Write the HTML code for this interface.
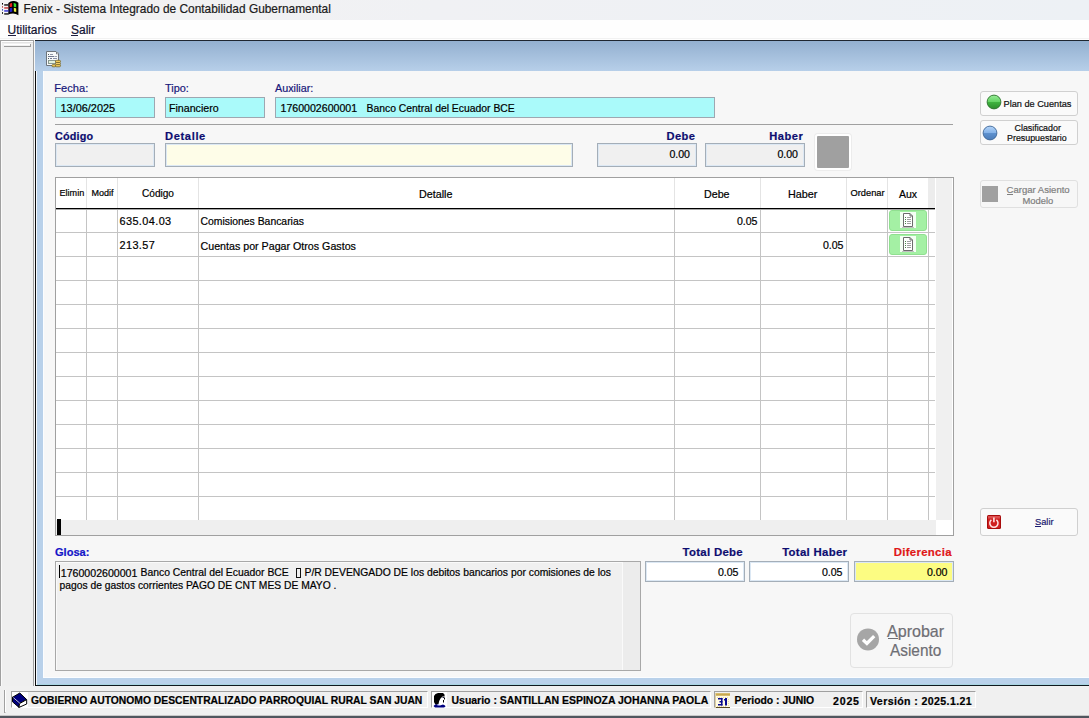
<!DOCTYPE html>
<html><head><meta charset="utf-8">
<style>
*{box-sizing:border-box;margin:0;padding:0}
html,body{width:1089px;height:718px;overflow:hidden;background:#f0f0f0;font-family:"Liberation Sans",sans-serif;font-size:11px;color:#000}
.a{position:absolute}
.t{position:absolute;white-space:pre;line-height:1;-webkit-text-stroke:.2px currentColor}
</style></head><body>
<div class="a" style="left:0px;top:0px;width:1089px;height:20px;background:linear-gradient(to right,#f3f2f2,#f0f1f4 40%,#edf1f5)"></div>
<div class="a" style="left:0px;top:20px;width:1089px;height:20px;background:#fefefe"></div>
<div class="a" style="left:0px;top:38px;width:1089px;height:1px;background:#f2f2f2"></div>
<div class="a" style="left:0px;top:40px;width:34px;height:647px;background:#efefef;border-left:1px solid #a0a0a0;border-right:1px solid #a0a0a0;border-top:1px solid #a0a0a0"></div>
<div class="a" style="left:1px;top:41px;width:32px;height:1px;background:#fff"></div>
<div class="a" style="left:1px;top:41px;width:1px;height:646px;background:#fafafa"></div>
<div class="a" style="left:2px;top:42px;width:31px;height:1px;background:#e2e2e2"></div>
<div class="a" style="left:4px;top:44px;width:27px;height:1px;background:#fff"></div>
<div class="a" style="left:4px;top:46px;width:27px;height:1px;background:#9c9c9c"></div>
<div class="a" style="left:30px;top:44px;width:1px;height:3px;background:#9c9c9c"></div>
<div class="a" style="left:34px;top:40px;width:1px;height:647px;background:#f8f8f8"></div>
<div class="a" style="left:35px;top:40px;width:1054px;height:1px;background:#1e2630"></div>
<div class="a" style="left:35px;top:41px;width:1054px;height:30px;background:linear-gradient(#93b0d0,#b7cfe9)"></div>
<div class="a" style="left:35px;top:71px;width:1px;height:615px;background:#0c0c0c"></div>
<div class="a" style="left:36px;top:71px;width:1px;height:614px;background:#f4f8fc"></div>
<div class="a" style="left:37px;top:71px;width:1052px;height:614px;background:#b9d1ea"></div>
<div class="a" style="left:36px;top:685px;width:1053px;height:1px;background:#10181e"></div>
<div class="a" style="left:37px;top:684px;width:1052px;height:1px;background:#a8d4e0"></div>
<div class="a" style="left:43px;top:71px;width:1046px;height:607px;background:#f7f7f7"></div>
<div class="a" style="left:43px;top:71px;width:1px;height:607px;background:#fbfdff"></div>
<div class="a" style="left:43px;top:677px;width:1046px;height:1px;background:#fbfdff"></div>
<svg class="a" style="left:46px;top:51px" width="16" height="17" viewBox="0 0 16 17">
<path d="M0.5 0.5H10L12.5 3V14.5H0.5Z" fill="#f6f9fa" stroke="#6c747c" stroke-width="1"/>
<rect x="10" y="1" width="2.2" height="2.2" fill="#687078"/><rect x="10.8" y="1.6" width="1" height="1" fill="#fff"/>
<rect x="2" y="3" width="1" height="1" fill="#505860"/><rect x="4" y="3" width="3" height="1" fill="#9098a8"/>
<rect x="2" y="5" width="6" height="1" fill="#707890"/><rect x="8.5" y="5" width="2.5" height="1" fill="#98a0b0"/>
<rect x="2" y="7" width="1" height="1" fill="#505860"/><rect x="4" y="7" width="2" height="1" fill="#707890"/><rect x="7" y="7" width="4" height="1" fill="#8890a8"/>
<rect x="2.5" y="9.5" width="7" height="3" fill="#e4f2dc" stroke="#8a9890" stroke-width="1"/>
<rect x="9.5" y="9.3" width="5" height="2.2" rx="1.1" fill="#f2cc58" stroke="#6a5a20" stroke-width=".7"/>
<rect x="9.5" y="11.5" width="5" height="2.2" rx="1.1" fill="#f4d068" stroke="#6a5a20" stroke-width=".7"/>
<rect x="5.8" y="13.6" width="4.2" height="2.2" rx="1.1" fill="#f2cc58" stroke="#6a5a20" stroke-width=".7"/>
<rect x="9.5" y="13.6" width="5" height="2.2" rx="1.1" fill="#f2cc58" stroke="#6a5a20" stroke-width=".7"/>
</svg>
<svg class="a" style="left:0px;top:0px" width="20" height="17" viewBox="0 0 20 17">
<path d="M8.3 3 Q11 0.6 14 1.1 Q16.6 1.4 18.4 2.8 L18.4 15.2 Q16 13.4 13 13.4 Q10.5 13.4 8.3 14.6 Z" fill="#000"/>
<path d="M9.6 3.8 Q10.8 2.9 12.1 2.9 L12.2 6.7 Q10.9 6.6 9.7 7.2Z" fill="#e82020"/>
<path d="M13.6 3.1 Q15 3.2 16.2 3.9 L16.2 7.2 Q15 6.8 13.8 6.7Z" fill="#30e030"/>
<path d="M9.7 8.2 Q10.9 7.6 12.2 7.7 L12.3 11.8 Q11 11.7 9.8 12.3Z" fill="#2020c8"/>
<path d="M13.8 7.8 Q15 7.9 16.2 8.4 L16.2 12 Q15 11.6 13.9 11.6Z" fill="#f0f040"/>
<rect x="2" y="3" width="1" height="1.6" fill="#000"/><rect x="2" y="6.2" width="1" height="1.4" fill="#b03030"/>
<rect x="2" y="9.2" width="1" height="1.4" fill="#2030b0"/><rect x="2" y="12.2" width="1" height="1.6" fill="#000"/>
<rect x="4.2" y="4.3" width="4.3" height="1.3" fill="#000"/><rect x="4.2" y="7.3" width="4.3" height="1.3" fill="#c02020"/>
<rect x="4.2" y="10.3" width="4.3" height="1.3" fill="#1818d0"/><rect x="4.2" y="13.3" width="4.3" height="1.3" fill="#000"/>
</svg>
<div class="t " style="left:23.50px;top:3.93px;font-size:11.9px;color:#1a1a1a;font-weight:normal;">Fenix - Sistema Integrado de Contabilidad Gubernamental</div>
<div class="t " style="left:7.50px;top:23.84px;font-size:12px;color:#101030;font-weight:normal;">Utilitarios</div>
<div class="a" style="left:8px;top:35px;width:8px;height:1px;background:#202040"></div>
<div class="t " style="left:71.00px;top:23.84px;font-size:12px;color:#101030;font-weight:normal;">Salir</div>
<div class="a" style="left:71px;top:35px;width:7px;height:1px;background:#202040"></div>
<div class="t " style="left:54.30px;top:82.60px;font-size:11.1px;color:#17177a;font-weight:normal;">Fecha:</div>
<div class="t " style="left:165.00px;top:82.77px;font-size:10.9px;color:#17177a;font-weight:normal;">Tipo:</div>
<div class="t " style="left:275.00px;top:82.90px;font-size:10.75px;color:#17177a;font-weight:normal;">Auxiliar:</div>
<div class="a" style="left:55px;top:97px;width:100px;height:21px;background:#aafafa;border:1px solid #9ea7b1"></div>
<div class="a" style="left:165px;top:97px;width:100px;height:21px;background:#aafafa;border:1px solid #9ea7b1"></div>
<div class="a" style="left:275px;top:97px;width:440px;height:21px;background:#aafafa;border:1px solid #9ea7b1"></div>
<div class="t " style="left:60.50px;top:102.76px;font-size:10.92px;color:#000;font-weight:normal;">13/06/2025</div>
<div class="t " style="left:169.00px;top:103.48px;font-size:10.65px;color:#000;font-weight:normal;">Financiero</div>
<div class="t " style="left:280.50px;top:103.03px;font-size:10.6px;color:#000;font-weight:normal;">1760002600001</div>
<div class="t " style="left:366.50px;top:103.71px;font-size:10.38px;color:#000;font-weight:normal;">Banco Central del Ecuador BCE</div>
<div class="a" style="left:55px;top:124px;width:898px;height:1px;background:#a0a0a0"></div>
<div class="t " style="left:55.00px;top:130.86px;font-size:10.8px;color:#0d0d70;font-weight:bold;letter-spacing:.2px">Código</div>
<div class="t " style="left:165.00px;top:130.60px;font-size:11.1px;color:#0d0d70;font-weight:bold;letter-spacing:.65px">Detalle</div>
<div class="t " style="right:393.70px;top:130.60px;font-size:11.1px;color:#0d0d70;font-weight:bold;letter-spacing:.4px">Debe</div>
<div class="t " style="right:285.70px;top:130.60px;font-size:11.1px;color:#0d0d70;font-weight:bold;letter-spacing:.5px">Haber</div>
<div class="a" style="left:55px;top:143px;width:100px;height:24px;background:#f0f0f0;border:1px solid #a4aeb8;box-shadow:inset 0 0 0 1px #dce8f4"></div>
<div class="a" style="left:165px;top:143px;width:408px;height:24px;background:#fefde8;border:1px solid #a4aeb8;box-shadow:inset 0 0 0 1px #dce8f4"></div>
<div class="a" style="left:597px;top:143px;width:100px;height:24px;background:#f0f0f0;border:1px solid #a4aeb8;box-shadow:inset 0 0 0 1px #dce8f4"></div>
<div class="a" style="left:705px;top:143px;width:100px;height:24px;background:#f0f0f0;border:1px solid #a4aeb8;box-shadow:inset 0 0 0 1px #dce8f4"></div>
<div class="t " style="right:399.00px;top:149.03px;font-size:10.6px;color:#000;font-weight:normal;">0.00</div>
<div class="t " style="right:291.00px;top:149.03px;font-size:10.6px;color:#000;font-weight:normal;">0.00</div>
<div class="a" style="left:815px;top:134px;width:36px;height:36px;background:#a0a0a0;border:2px solid #fff;border-radius:3px;box-shadow:0 0 0 1px #ececec"></div>
<div class="a" style="left:55px;top:177px;width:899px;height:359px;background:#fff;border:1px solid #a0a0a0"></div>
<div class="a" style="left:86px;top:178px;width:1px;height:30px;background:#e4e4e4"></div>
<div class="a" style="left:117px;top:178px;width:1px;height:30px;background:#e4e4e4"></div>
<div class="a" style="left:198px;top:178px;width:1px;height:30px;background:#e4e4e4"></div>
<div class="a" style="left:674px;top:178px;width:1px;height:30px;background:#e4e4e4"></div>
<div class="a" style="left:760px;top:178px;width:1px;height:30px;background:#e4e4e4"></div>
<div class="a" style="left:846px;top:178px;width:1px;height:30px;background:#e4e4e4"></div>
<div class="a" style="left:887px;top:178px;width:1px;height:30px;background:#e4e4e4"></div>
<div class="a" style="left:928px;top:178px;width:1px;height:30px;background:#e4e4e4"></div>
<div class="a" style="left:928px;top:178px;width:7px;height:30px;background:#ececec"></div>
<div class="a" style="left:56px;top:208px;width:879px;height:1px;background:#000"></div>
<div class="a" style="left:56px;top:209px;width:879px;height:1px;background:#a8a8a8"></div>
<div class="a" style="left:56px;top:232px;width:879px;height:1px;background:#c4c4c4"></div>
<div class="a" style="left:56px;top:256px;width:879px;height:1px;background:#c4c4c4"></div>
<div class="a" style="left:56px;top:280px;width:879px;height:1px;background:#c4c4c4"></div>
<div class="a" style="left:56px;top:304px;width:879px;height:1px;background:#c4c4c4"></div>
<div class="a" style="left:56px;top:328px;width:879px;height:1px;background:#c4c4c4"></div>
<div class="a" style="left:56px;top:352px;width:879px;height:1px;background:#c4c4c4"></div>
<div class="a" style="left:56px;top:376px;width:879px;height:1px;background:#c4c4c4"></div>
<div class="a" style="left:56px;top:400px;width:879px;height:1px;background:#c4c4c4"></div>
<div class="a" style="left:56px;top:424px;width:879px;height:1px;background:#c4c4c4"></div>
<div class="a" style="left:56px;top:448px;width:879px;height:1px;background:#c4c4c4"></div>
<div class="a" style="left:56px;top:472px;width:879px;height:1px;background:#c4c4c4"></div>
<div class="a" style="left:56px;top:496px;width:879px;height:1px;background:#c4c4c4"></div>
<div class="a" style="left:86px;top:210px;width:1px;height:310px;background:#c4c4c4"></div>
<div class="a" style="left:117px;top:210px;width:1px;height:310px;background:#c4c4c4"></div>
<div class="a" style="left:198px;top:210px;width:1px;height:310px;background:#c4c4c4"></div>
<div class="a" style="left:674px;top:210px;width:1px;height:310px;background:#c4c4c4"></div>
<div class="a" style="left:760px;top:210px;width:1px;height:310px;background:#c4c4c4"></div>
<div class="a" style="left:846px;top:210px;width:1px;height:310px;background:#c4c4c4"></div>
<div class="a" style="left:887px;top:210px;width:1px;height:310px;background:#c4c4c4"></div>
<div class="a" style="left:928px;top:210px;width:1px;height:310px;background:#c4c4c4"></div>
<div class="a" style="left:936px;top:178px;width:16px;height:342px;background:#f0f0f0"></div>
<div class="a" style="left:56px;top:520px;width:880px;height:15px;background:#efefef"></div>
<div class="a" style="left:57px;top:519px;width:4px;height:16px;background:#000"></div>
<div class="t " style="left:59.50px;top:189.30px;font-size:9.1px;color:#000;font-weight:normal;">Elimin</div>
<div class="t " style="left:91.50px;top:189.38px;font-size:9px;color:#000;font-weight:normal;">Modif</div>
<div class="t " style="left:142.00px;top:189.45px;font-size:10.1px;color:#000;font-weight:normal;">Código</div>
<div class="t " style="left:419.00px;top:188.90px;font-size:10.75px;color:#000;font-weight:normal;">Detalle</div>
<div class="t " style="left:704.00px;top:188.94px;font-size:10.7px;color:#000;font-weight:normal;">Debe</div>
<div class="t " style="left:788.00px;top:188.86px;font-size:10.8px;color:#000;font-weight:normal;">Haber</div>
<div class="t " style="left:850.50px;top:189.13px;font-size:9.3px;color:#000;font-weight:normal;">Ordenar</div>
<div class="t " style="left:899.00px;top:189.11px;font-size:10.5px;color:#000;font-weight:normal;">Aux</div>
<div class="t " style="left:119.50px;top:215.77px;font-size:10.9px;color:#000;font-weight:normal;letter-spacing:.4px">635.04.03</div>
<div class="t " style="left:200.50px;top:217.20px;font-size:10.4px;color:#000;font-weight:normal;">Comisiones Bancarias</div>
<div class="t " style="right:331.50px;top:216.03px;font-size:10.6px;color:#000;font-weight:normal;">0.05</div>
<div class="t " style="left:119.50px;top:239.77px;font-size:10.9px;color:#000;font-weight:normal;letter-spacing:.4px">213.57</div>
<div class="t " style="left:200.50px;top:240.96px;font-size:10.68px;color:#000;font-weight:normal;">Cuentas por Pagar Otros Gastos</div>
<div class="t " style="right:245.50px;top:240.03px;font-size:10.6px;color:#000;font-weight:normal;">0.05</div>
<div class="a" style="left:889px;top:210px;width:38px;height:21px;background:#a4f0a4;border:1px solid #90e090;border-radius:3px"></div>
<svg class="a" style="left:900px;top:212px" width="16" height="16" viewBox="0 0 16 16">
<rect x="0" y="0" width="16" height="16" fill="#f4fff4"/>
<path d="M3.5 1.5h6.5l2.5 2.5v10.5h-9z" fill="#fff" stroke="#6c6c6c" stroke-width="1"/>
<path d="M10 1.5v2.5h2.5" fill="none" stroke="#6c6c6c" stroke-width="1"/>
<rect x="5" y="5" width="1" height="1" fill="#4a8a4a"/><rect x="7" y="5" width="4" height="1" fill="#a0a0a0"/>
<rect x="5" y="7" width="1" height="1" fill="#4a8a4a"/><rect x="7" y="7" width="4" height="1" fill="#a0a0a0"/>
<rect x="5" y="9" width="1" height="1" fill="#4a8a4a"/><rect x="7" y="9" width="4" height="1" fill="#a0a0a0"/>
<rect x="5" y="11" width="1" height="1" fill="#4a8a4a"/><rect x="7" y="11" width="4" height="1" fill="#a0a0a0"/>
<rect x="2" y="15" width="12" height="1" fill="#c0c0c0"/>
</svg>
<div class="a" style="left:889px;top:234px;width:38px;height:21px;background:#a4f0a4;border:1px solid #90e090;border-radius:3px"></div>
<svg class="a" style="left:900px;top:236px" width="16" height="16" viewBox="0 0 16 16">
<rect x="0" y="0" width="16" height="16" fill="#f4fff4"/>
<path d="M3.5 1.5h6.5l2.5 2.5v10.5h-9z" fill="#fff" stroke="#6c6c6c" stroke-width="1"/>
<path d="M10 1.5v2.5h2.5" fill="none" stroke="#6c6c6c" stroke-width="1"/>
<rect x="5" y="5" width="1" height="1" fill="#4a8a4a"/><rect x="7" y="5" width="4" height="1" fill="#a0a0a0"/>
<rect x="5" y="7" width="1" height="1" fill="#4a8a4a"/><rect x="7" y="7" width="4" height="1" fill="#a0a0a0"/>
<rect x="5" y="9" width="1" height="1" fill="#4a8a4a"/><rect x="7" y="9" width="4" height="1" fill="#a0a0a0"/>
<rect x="5" y="11" width="1" height="1" fill="#4a8a4a"/><rect x="7" y="11" width="4" height="1" fill="#a0a0a0"/>
<rect x="2" y="15" width="12" height="1" fill="#c0c0c0"/>
</svg>
<div class="t " style="left:55.00px;top:546.65px;font-size:11.05px;color:#1414c8;font-weight:bold;">Glosa:</div>
<div class="a" style="left:55px;top:561px;width:586px;height:110px;background:#f0f0f0;border:1px solid #a8a8a8;box-shadow:inset 1px 1px 0 #fafafa"></div>
<div class="a" style="left:622px;top:562px;width:1px;height:108px;background:#fafafa"></div>
<div class="a" style="left:623px;top:562px;width:17px;height:108px;background:#ececec"></div>
<div class="a" style="left:59px;top:565px;width:1px;height:13px;background:#000"></div>
<div class="t " style="left:60.80px;top:568.03px;font-size:10.6px;color:#000;font-weight:normal;">1760002600001</div>
<div class="t " style="left:140.50px;top:568.21px;font-size:10.38px;color:#000;font-weight:normal;">Banco Central del Ecuador BCE</div>
<div class="a" style="left:296px;top:568px;width:5px;height:10px;border:1px solid #111"></div>
<div class="t " style="left:304.50px;top:568.24px;font-size:10.35px;color:#000;font-weight:normal;">P/R DEVENGADO DE los debitos bancarios por comisiones de los</div>
<div class="t " style="left:59.50px;top:581.08px;font-size:10.3px;color:#000;font-weight:normal;">pagos de gastos corrientes PAGO DE CNT MES DE MAYO .</div>
<div class="t " style="right:346.00px;top:546.85px;font-size:11.4px;color:#0d0d70;font-weight:bold;letter-spacing:.3px">Total Debe</div>
<div class="t " style="right:241.70px;top:546.85px;font-size:11.4px;color:#0d0d70;font-weight:bold;letter-spacing:.3px">Total Haber</div>
<div class="t " style="right:137.20px;top:546.85px;font-size:11.4px;color:#e01818;font-weight:bold;letter-spacing:.3px">Diferencia</div>
<div class="a" style="left:645px;top:561px;width:100px;height:21px;background:#fff;border:1px solid #a4aeb8;box-shadow:inset 0 0 0 1px #dce8f4"></div>
<div class="a" style="left:749px;top:561px;width:100px;height:21px;background:#fff;border:1px solid #a4aeb8;box-shadow:inset 0 0 0 1px #dce8f4"></div>
<div class="a" style="left:854px;top:561px;width:100px;height:21px;background:#fcfc82;border:1px solid #a4aeb8;box-shadow:inset 0 0 0 1px #dce8f4"></div>
<div class="t " style="right:350.50px;top:567.03px;font-size:10.6px;color:#000;font-weight:normal;">0.05</div>
<div class="t " style="right:246.50px;top:567.03px;font-size:10.6px;color:#000;font-weight:normal;">0.05</div>
<div class="t " style="right:141.50px;top:567.03px;font-size:10.6px;color:#000;font-weight:normal;">0.00</div>
<div class="a" style="left:850px;top:613px;width:103px;height:55px;background:#f7f7f7;border:1px solid #e2e2e2;border-radius:4px"></div>
<svg class="a" style="left:857px;top:628px" width="22" height="23" viewBox="0 0 22 23">
<circle cx="11" cy="11.4" r="11" fill="#a6a6a6"/>
<path d="M6 11.8 L9.9 15.4 L17.2 8.2" fill="none" stroke="#fff" stroke-width="3.3"/>
</svg>
<div class="t " style="left:887.30px;top:622.81px;font-size:17px;color:#6e6e74;font-weight:normal;transform:scaleX(.945);transform-origin:0 0">Aprobar</div>
<div class="a" style="left:888px;top:638px;width:10px;height:1px;background:#6e6e74"></div>
<div class="t " style="left:889.80px;top:641.61px;font-size:17px;color:#6e6e74;font-weight:normal;transform:scaleX(.905);transform-origin:0 0">Asiento</div>
<div class="a" style="left:980px;top:91px;width:98px;height:25px;background:#fafafa;border:1px solid #d0d0d0;border-radius:3px"></div>
<svg class="a" style="left:986px;top:94px" width="16" height="16" viewBox="0 0 16 16">
<defs><linearGradient id="gg" x1="0" y1="0" x2="0" y2="1"><stop offset="0" stop-color="#98ec98"/><stop offset=".5" stop-color="#62d262"/><stop offset=".5" stop-color="#3fb43f"/><stop offset="1" stop-color="#2c8c2c"/></linearGradient></defs>
<circle cx="8" cy="8" r="6.9" fill="url(#gg)" stroke="#2c702c" stroke-width=".9"/>
</svg>
<div class="t " style="left:1003.50px;top:99.71px;font-size:9.2px;color:#101010;font-weight:normal;">Plan de Cuentas</div>
<div class="a" style="left:980px;top:120px;width:98px;height:25px;background:#fafafa;border:1px solid #d0d0d0;border-radius:3px"></div>
<svg class="a" style="left:982px;top:125px" width="16" height="16" viewBox="0 0 16 16">
<defs><linearGradient id="bg" x1="0" y1="0" x2="0" y2="1"><stop offset="0" stop-color="#b4d4f8"/><stop offset=".5" stop-color="#84b2e8"/><stop offset=".5" stop-color="#5f92cf"/><stop offset="1" stop-color="#4c7cb8"/></linearGradient></defs>
<circle cx="8" cy="8" r="6.9" fill="url(#bg)" stroke="#3e6696" stroke-width=".9"/>
</svg>
<div class="t " style="left:1014.50px;top:123.97px;font-size:8.9px;color:#101010;font-weight:normal;">Clasificador</div>
<div class="t " style="left:1007.00px;top:134.47px;font-size:8.9px;color:#101010;font-weight:normal;">Presupuestario</div>
<div class="a" style="left:980px;top:180px;width:98px;height:28px;background:#f7f7f7;border:1px solid #e0e0e0;border-radius:3px"></div>
<div class="a" style="left:982px;top:186px;width:16px;height:16px;background:#a0a0a0"></div>
<div class="t " style="left:1006.50px;top:184.92px;font-size:9.55px;color:#808080;font-weight:normal;">Cargar Asiento</div>
<div class="a" style="left:1007px;top:194px;width:6px;height:1px;background:#808080"></div>
<div class="t " style="left:1022.50px;top:196.04px;font-size:9.4px;color:#808080;font-weight:normal;">Modelo</div>
<div class="a" style="left:980px;top:508px;width:98px;height:28px;background:#fafafa;border:1px solid #d0d0d0;border-radius:3px"></div>
<svg class="a" style="left:987px;top:515px" width="14" height="14" viewBox="0 0 14 14">
<rect width="14" height="14" rx="1.5" fill="#a80c0c"/>
<rect x="1" y="1" width="12" height="12" rx="1" fill="#d02020"/>
<rect x="1" y="1" width="12" height="2.5" fill="#e87070" opacity=".6"/>
<path d="M4.4 4.9 A4.1 4.1 0 1 0 9.4 4.9" stroke="#ffe4e4" stroke-width="1.5" fill="none"/>
<path d="M6.9 2.6 V7.3" stroke="#ffe4e4" stroke-width="1.6"/>
</svg>
<div class="t " style="left:1035.00px;top:518.13px;font-size:9.3px;color:#1a1a70;font-weight:normal;">Salir</div>
<div class="a" style="left:1035px;top:526px;width:6px;height:1px;background:#1a1a70"></div>
<div class="a" style="left:0px;top:686px;width:1089px;height:32px;background:#f0f0f0"></div>
<div class="a" style="left:0px;top:715px;width:1089px;height:1px;background:#c8c8c8"></div>
<div class="a" style="left:0px;top:716px;width:1089px;height:2px;background:#50565e"></div>
<div class="a" style="left:4px;top:690px;width:2px;height:23px;border-left:1px solid #a0a0a0;border-right:1px solid #fff;border-bottom:1px solid #a0a0a0"></div>
<div class="a" style="left:11px;top:691px;width:417px;height:17px;border-top:1px solid #a0a0a0;border-left:1px solid #a0a0a0;border-bottom:1px solid #fff;border-right:1px solid #fff"></div>
<div class="a" style="left:431px;top:691px;width:280px;height:17px;border-top:1px solid #a0a0a0;border-left:1px solid #a0a0a0;border-bottom:1px solid #fff;border-right:1px solid #fff"></div>
<div class="a" style="left:714px;top:691px;width:149px;height:17px;border-top:1px solid #a0a0a0;border-left:1px solid #a0a0a0;border-bottom:1px solid #fff;border-right:1px solid #fff"></div>
<div class="a" style="left:866px;top:691px;width:110px;height:17px;border-top:1px solid #a0a0a0;border-left:1px solid #a0a0a0;border-bottom:1px solid #fff;border-right:1px solid #fff"></div>
<svg class="a" style="left:12px;top:692px" width="16" height="16" viewBox="0 0 16 16">
<rect width="16" height="16" fill="#fff"/>
<path d="M7.8 1 L0.5 5.3 L7.5 11.6 L14.7 7.6 Z" fill="#00007e" stroke="#000" stroke-width="1" stroke-linejoin="round"/>
<path d="M0.5 5.3 L0.5 9.8 L7 15.4 L7.5 11.6Z" fill="#00007e" stroke="#000" stroke-width="1" stroke-linejoin="round"/>
<path d="M7.5 11.6 L14.7 7.6 L14.7 12 L7 15.4Z" fill="#fff" stroke="#000" stroke-width="1" stroke-linejoin="round"/>
<path d="M1.3 5.6 L7.8 11.2" stroke="#b8b8ff" stroke-width="1"/>
</svg>
<div class="t " style="left:31.00px;top:696.25px;font-size:10.34px;color:#000;font-weight:bold;">GOBIERNO AUTONOMO DESCENTRALIZADO PARROQUIAL RURAL SAN JUAN</div>
<svg class="a" style="left:432px;top:692px" width="15" height="16" viewBox="0 0 15 16">
<rect width="15" height="16" fill="#fff"/>
<path d="M2 10 L2 4 L3.5 2 L6 1 L11 1 L12.5 2.5 L12.6 4.5 L10.5 4.5 L8.5 6.5 L7.2 9 L6.5 12 L5 13 L3 12 Z" fill="#000"/>
<path d="M12.6 4.5 L13 6 L12.2 7 L11.5 9 L11.2 11 L9.5 12.2 L8 13 Z" fill="#000" opacity=".0"/>
<rect x="10.5" y="5" width="1.5" height="1" fill="#202040"/>
<rect x="12" y="5.5" width="1" height="2" fill="#000"/>
<rect x="11" y="8" width="1" height="2.5" fill="#000"/>
<path d="M1.5 14 L3.5 12.3 L5.5 12.8 L8 13.5 L11 12.5 L13 13.5 L13.5 14.5 L12 15.5 L3 15.5 Z" fill="#000080"/>
<path d="M5 12.5 L7 12.2 L7.5 13.5 L5.5 13.5Z" fill="#c0c0ff"/>
</svg>
<div class="t " style="left:451.50px;top:696.14px;font-size:10.47px;color:#000;font-weight:bold;">Usuario : SANTILLAN ESPINOZA JOHANNA PAOLA</div>
<svg class="a" style="left:715px;top:693px" width="15" height="15" viewBox="0 0 15 15">
<rect width="15" height="15" fill="#fffbe4"/>
<rect x="0" y="0" width="1" height="15" fill="#e0cfa0"/>
<rect x="1" y="0" width="14" height="3" fill="#d8bc70"/>
<rect x="1" y="1" width="14" height="1" fill="#c8a850"/>
<g fill="#e8d8a8"><rect x="2" y="4" width="1" height="1"/><rect x="4" y="4" width="1" height="1"/><rect x="6" y="4" width="1" height="1"/><rect x="8" y="4" width="1" height="1"/><rect x="10" y="4" width="1" height="1"/><rect x="12" y="4" width="1" height="1"/>
<rect x="13" y="6" width="1" height="1"/><rect x="13" y="8" width="1" height="1"/><rect x="13" y="10" width="1" height="1"/><rect x="13" y="12" width="1" height="1"/>
<rect x="2" y="13" width="1" height="1"/><rect x="4" y="13" width="1" height="1"/><rect x="6" y="13" width="1" height="1"/><rect x="8" y="13" width="1" height="1"/><rect x="10" y="13" width="1" height="1"/></g>
<rect x="1" y="14" width="14" height="1" fill="#5a4a20"/>
<g fill="#0a0a90"><rect x="3" y="5" width="4.5" height="1.5"/><rect x="4.5" y="8" width="3" height="1.5"/><rect x="3" y="11" width="4.5" height="1.5"/><rect x="6" y="5" width="1.5" height="7.5"/>
<rect x="10" y="5" width="2" height="7.5"/><rect x="9" y="6" width="1" height="1.5"/></g>
</svg>
<div class="t " style="left:734.50px;top:696.20px;font-size:10.4px;color:#000;font-weight:bold;">Periodo : JUNIO</div>
<div class="t " style="left:833.00px;top:696.03px;font-size:10.6px;color:#000;font-weight:bold;letter-spacing:.8px">2025</div>
<div class="t " style="left:870.00px;top:696.03px;font-size:10.6px;color:#000;font-weight:bold;letter-spacing:.38px">Versión : 2025.1.21</div>
</body></html>
